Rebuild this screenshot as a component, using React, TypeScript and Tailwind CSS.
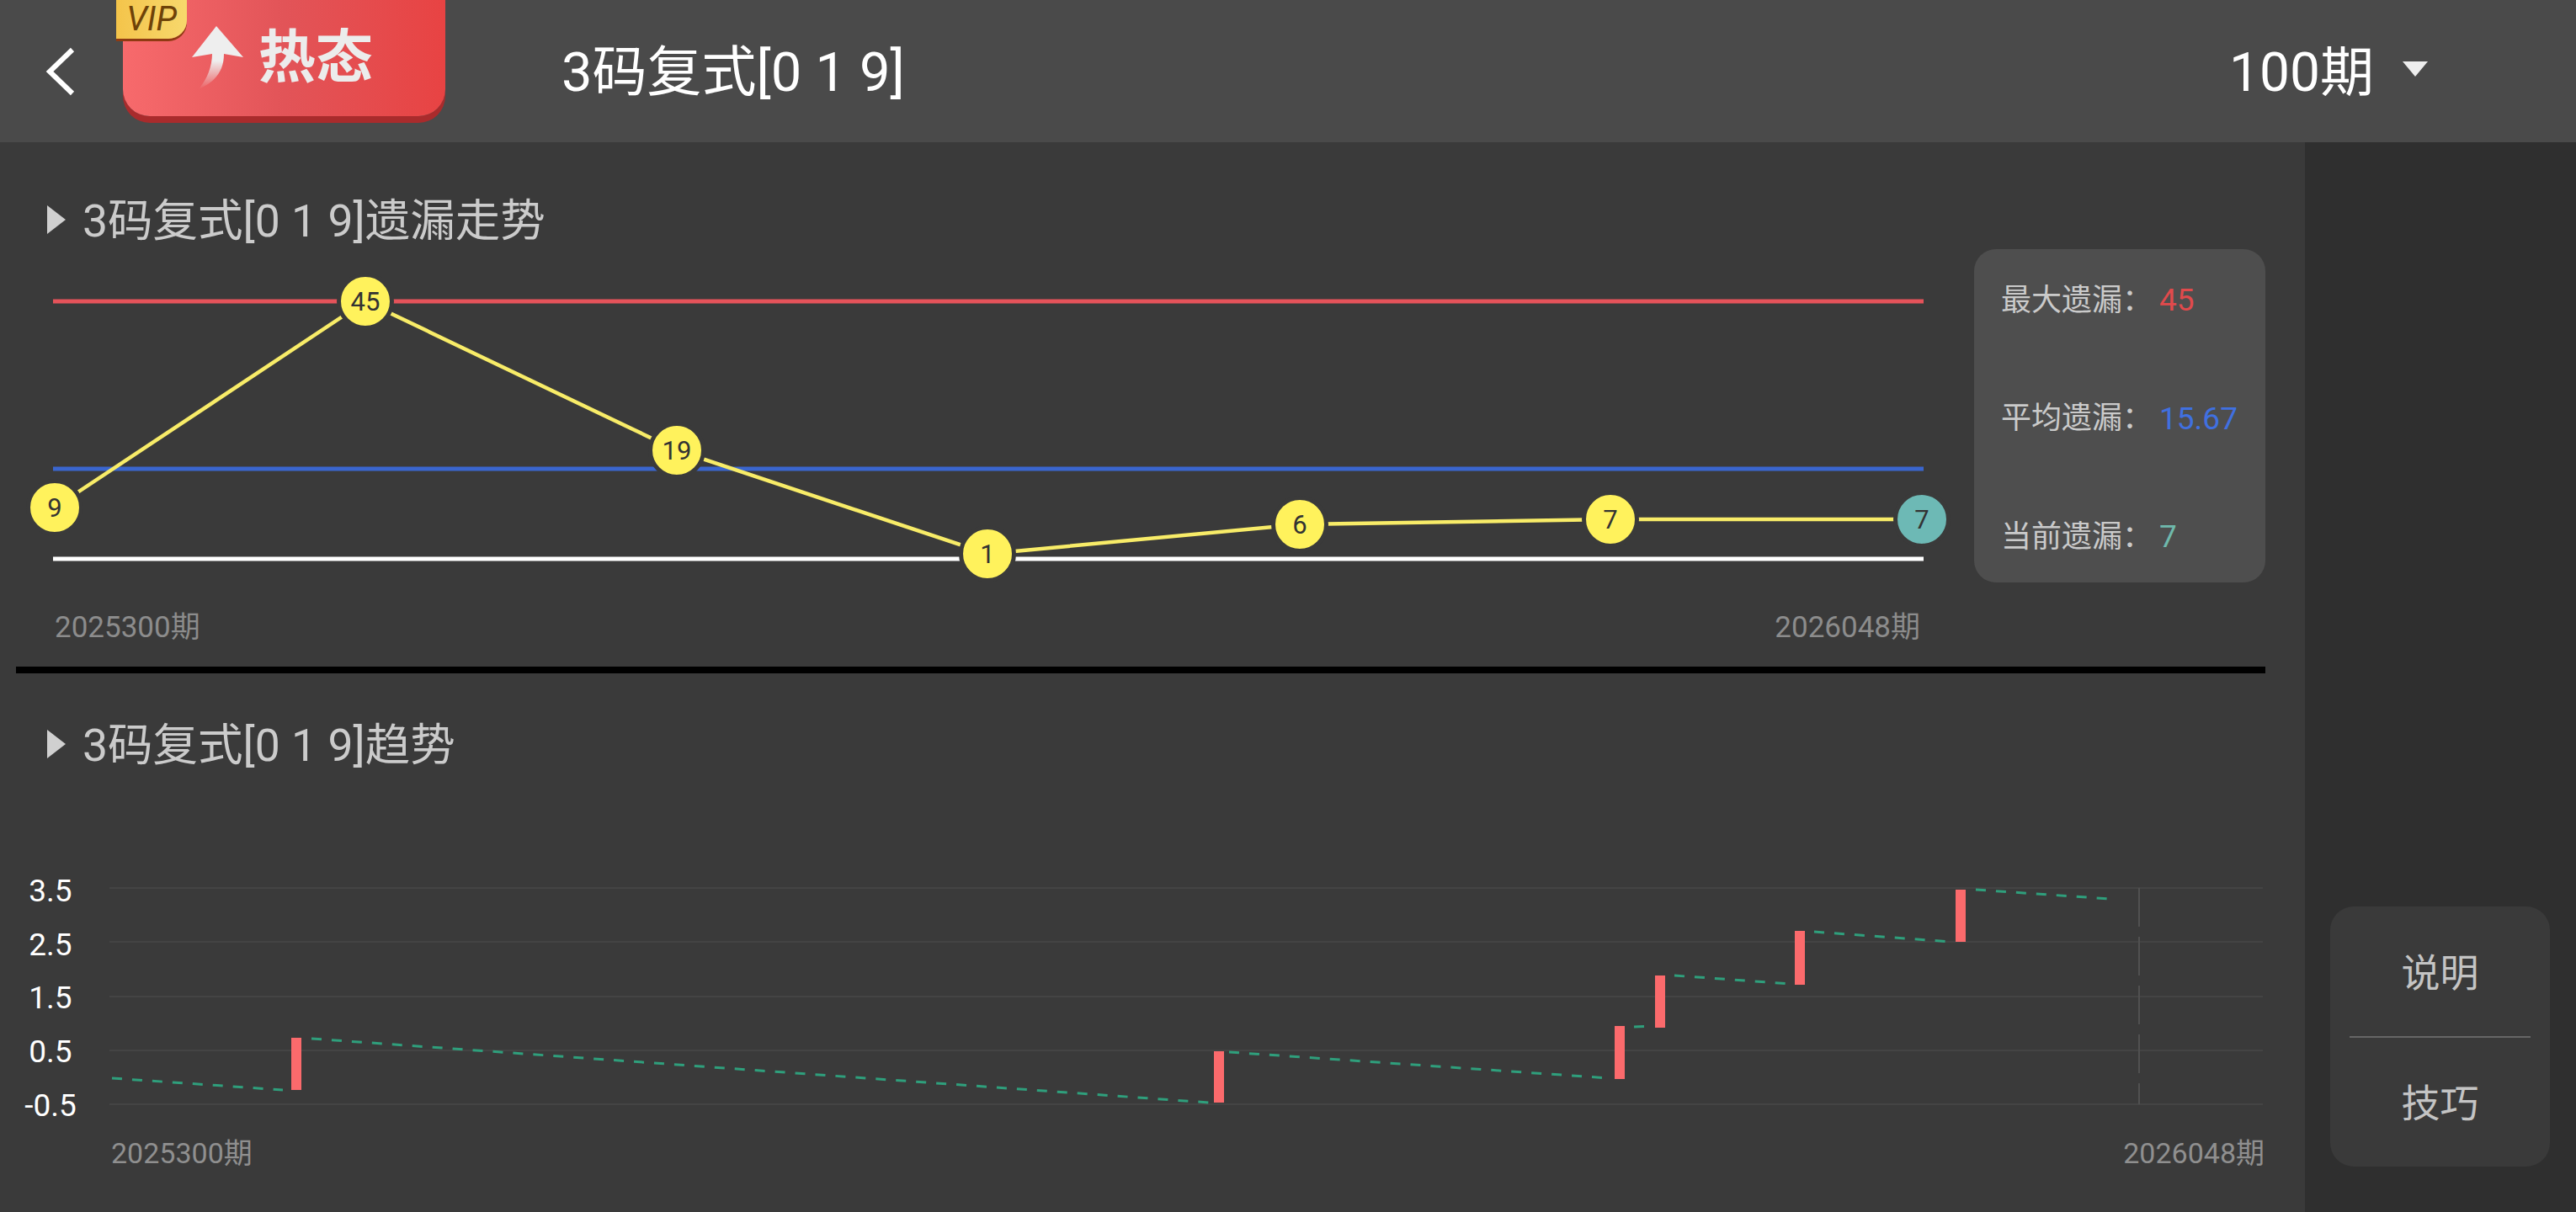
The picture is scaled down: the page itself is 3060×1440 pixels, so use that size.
import React from "react";

const circles: [number, number, string, string][] = [
  [65, 603, "9", "#fff25c"],
  [434, 358, "45", "#fff25c"],
  [804, 535, "19", "#fff25c"],
  [1173, 658, "1", "#fff25c"],
  [1544, 623, "6", "#fff25c"],
  [1913, 617, "7", "#fff25c"],
  [2283, 617, "7", "#6db9b5"],
];

const bars: [number, number, number][] = [
  [346, 1233, 1295],
  [1442, 1249, 1310],
  [1918, 1219, 1282],
  [1966, 1159, 1221],
  [2132, 1106, 1170],
  [2323, 1057, 1119],
];

const dashes: [number, number, number, number][] = [
  [133, 1281, 336, 1295],
  [370, 1234, 1436, 1310],
  [1460, 1250, 1912, 1281],
  [1941, 1220, 1962, 1219],
  [1989, 1159, 2126, 1169],
  [2155, 1107, 2318, 1119],
  [2347, 1057, 2506, 1068],
];

const grid = [1055, 1119, 1184, 1248, 1312];

function SectionTitle({ children }: { children: React.ReactNode }) {
  return (
    <div className="flex h-[70px] items-center pl-[55px]">
      <svg width="24" height="36" viewBox="0 0 24 36" className="mr-[19px] shrink-0">
        <path d="M1 1 L23 18 L1 35 Z" fill="#d0d0d0" />
      </svg>
      <span className="mt-[4px] text-[53.5px] leading-none text-[#cbcbcb] whitespace-nowrap">{children}</span>
    </div>
  );
}

function Stat({ label, value, color }: { label: string; value: string; color: string }) {
  return (
    <div className="flex items-center whitespace-nowrap leading-none">
      <span className="w-[188px] text-[36px] text-[#cacaca]">{label}：</span>
      <span className={`text-[37px] ${color}`}>{value}</span>
    </div>
  );
}

export default function App() {
  return (
    <div className="flex h-[1440px] w-[3060px] flex-col overflow-hidden bg-[#3a3a3a] font-['Roboto','Noto_Sans_CJK_SC',sans-serif]">
      <header className="flex h-[169px] shrink-0 items-center bg-[#4a4a4a]">
        <svg width="36" height="58" viewBox="0 0 36 58" className="ml-[54px] shrink-0">
          <path d="M32 3 L5 29 L32 55" fill="none" stroke="#fff" strokeWidth="6" />
        </svg>
        <div className="relative ml-[56px] h-[138px] w-[383px] shrink-0 self-start rounded-b-[32px] bg-gradient-to-r from-[#f76a6c] via-[#e25458] to-[#e84343] shadow-[0_8px_0_#a92b2c]">
          <div className="absolute left-[-8px] top-0 flex h-[46px] w-[84px] items-center justify-center rounded-br-[22px] bg-gradient-to-r from-[#f4c44a] to-[#f7d86c] shadow-[0_3px_0_#8f3a12]">
            <span className="text-[40px] italic leading-[34px] text-[#6e4208]">VIP</span>
          </div>
          <div className="flex h-full items-center pl-[82px]">
            <svg width="64" height="80" viewBox="0 0 64 80" className="mr-[15px] shrink-0">
              <defs>
                <linearGradient id="arrowFade" x1="0" y1="0" x2="0" y2="1">
                  <stop offset="0" stopColor="#eeeeee" />
                  <stop offset="0.55" stopColor="#eeeeee" />
                  <stop offset="1" stopColor="#eeeeee" stopOpacity="0" />
                </linearGradient>
              </defs>
              <path d="M29 2 L61 39 L38 35 C38 55 28 68 8 77 C18 65 24 50 24 35 L0 39 Z" fill="url(#arrowFade)" />
            </svg>
            <span className="text-[68px] font-bold leading-none text-[#ececec] whitespace-nowrap">热态</span>
          </div>
        </div>
        <h1 className="ml-[138px] mt-[4px] text-[65px] font-normal leading-none text-white whitespace-nowrap">3码复式[0 1 9]</h1>
        <div className="ml-auto flex items-center pr-[175px]">
          <span className="mt-[4px] text-[64px] leading-none text-white whitespace-nowrap">100期</span>
          <svg width="32" height="20" viewBox="0 0 32 20" className="mb-[6px] ml-[33px] shrink-0">
            <path d="M1 1 L31 1 L16 19 Z" fill="#eeeeee" />
          </svg>
        </div>
      </header>

      <div className="flex flex-1">
        <main className="w-[2738px] shrink-0 bg-[#3a3a3a]">
          <section className="h-[623px] pt-[57px]">
            <SectionTitle>3码复式[0 1 9]遗漏走势</SectionTitle>
            <div className="flex">
              <div className="w-[2345px] shrink-0">
                <svg width="2345" height="424" viewBox="0 296 2345 424" className="block">
                  <line x1="63" y1="358" x2="2285" y2="358" stroke="#e5535a" strokeWidth="5" />
                  <line x1="63" y1="557" x2="2285" y2="557" stroke="#3a66cf" strokeWidth="5" />
                  <line x1="63" y1="664" x2="2285" y2="664" stroke="#ffffff" strokeWidth="5" />
                  <polyline
                    points={circles.map((c) => `${c[0]},${c[1]}`).join(" ")}
                    fill="none"
                    stroke="#f8ec68"
                    strokeWidth="4.5"
                  />
                  {circles.map((c, i) => (
                    <g key={i}>
                      <circle cx={c[0]} cy={c[1]} r="31.5" fill={c[3]} stroke="#3a3a3a" strokeWidth="5" />
                      <text x={c[0]} y={c[1] + 11} textAnchor="middle" fontSize="31" fill="#333">
                        {c[2]}
                      </text>
                    </g>
                  ))}
                </svg>
                <div className="ml-[65px] mr-[64px] flex h-[50px] items-center justify-between text-[35px] leading-none text-[#8c8c8c]">
                  <span>2025300期</span>
                  <span>2026048期</span>
                </div>
              </div>
              <aside className="flex h-[396px] w-[346px] shrink-0 flex-col justify-between rounded-[26px] bg-[#4e4e4e] pb-[36px] pl-[32px] pt-[42px]">
                <Stat label="最大遗漏" value="45" color="text-[#e14a4c]" />
                <Stat label="平均遗漏" value="15.67" color="text-[#4070e0]" />
                <Stat label="当前遗漏" value="7" color="text-[#6fb9ac]" />
              </aside>
            </div>
          </section>

          <div className="ml-[19px] h-[8px] w-[2672px] bg-black" />

          <section className="pt-[49px]">
            <SectionTitle>3码复式[0 1 9]趋势</SectionTitle>
            <div className="mt-[106px] flex h-[320px]">
              <div className="mt-[2px] flex w-[120px] shrink-0 flex-col text-center text-[37px] leading-none text-white">
                {["3.5", "2.5", "1.5", "0.5", "-0.5"].map((v) => (
                  <div key={v} className="flex h-[64px] items-center justify-center">
                    {v}
                  </div>
                ))}
              </div>
              <svg width="2618" height="320" viewBox="120 1025 2618 320" className="block shrink-0">
                {grid.map((y) => (
                  <line key={y} x1="130" y1={y} x2="2688" y2={y} stroke="#444444" strokeWidth="2" />
                ))}
                <line x1="2541" y1="1055" x2="2541" y2="1312" stroke="#505050" strokeWidth="2" strokeDasharray="46 12" />
                {dashes.map((d, i) => (
                  <line key={i} x1={d[0]} y1={d[1]} x2={d[2]} y2={d[3]} stroke="#2f9f7c" strokeWidth="3" strokeDasharray="12 12" />
                ))}
                {bars.map((b, i) => (
                  <rect key={i} x={b[0]} y={b[1]} width="12" height={b[2] - b[1]} fill="#fb6a6c" />
                ))}
              </svg>
            </div>
            <div className="ml-[132px] mr-[48px] flex h-[50px] items-center justify-between text-[34px] leading-none text-[#8f8f8f]">
              <span>2025300期</span>
              <span>2026048期</span>
            </div>
          </section>
        </main>

        <aside className="flex flex-1 flex-col bg-[#2f2f2f] pl-[30px] pt-[908px]">
          <div className="flex h-[309px] w-[261px] flex-col items-center rounded-[28px] bg-[#3a3a3a] text-[46px] leading-none text-[#c4c4c4]">
            <div className="flex h-[154px] items-center pt-[3px]">说明</div>
            <div className="h-[2px] w-[215px] bg-[#666666]" />
            <div className="flex h-[153px] items-center pt-[2px]">技巧</div>
          </div>
        </aside>
      </div>
    </div>
  );
}
